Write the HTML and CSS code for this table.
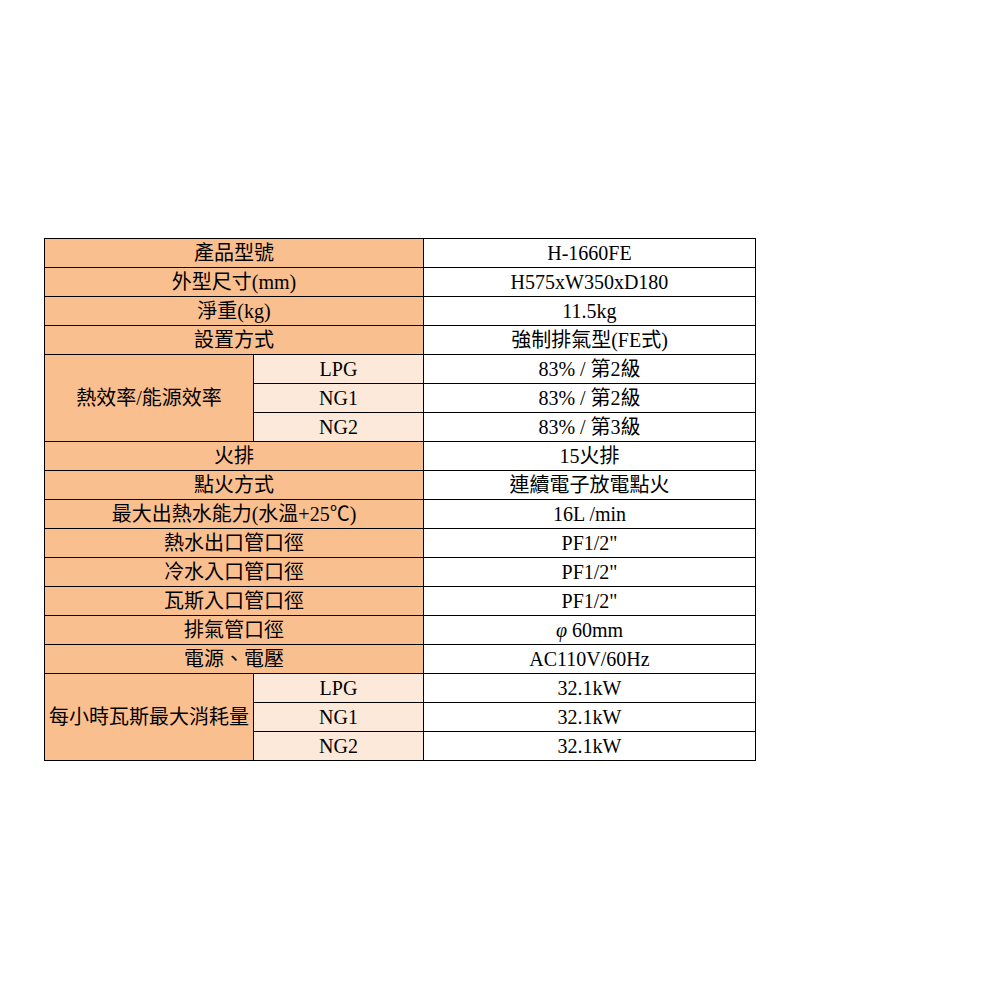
FILE: index.html
```html
<!DOCTYPE html>
<html lang="zh-Hant">
<head>
<meta charset="utf-8">
<link rel="stylesheet" href="styles.css">
</head>
<body>
<table class="spec">
  <colgroup>
    <col class="c1">
    <col class="c2">
    <col class="c3">
  </colgroup>
  <tr><th colspan="2">產品型號</th><td>H-1660FE</td></tr>
  <tr><th colspan="2">外型尺寸(mm)</th><td>H575xW350xD180</td></tr>
  <tr><th colspan="2">淨重(kg)</th><td>11.5kg</td></tr>
  <tr><th colspan="2">設置方式</th><td>強制排氣型(FE式)</td></tr>
  <tr><th rowspan="3">熱效率/能源效率</th><th class="sub">LPG</th><td>83% / 第2級</td></tr>
  <tr><th class="sub">NG1</th><td>83% / 第2級</td></tr>
  <tr><th class="sub">NG2</th><td>83% / 第3級</td></tr>
  <tr><th colspan="2">火排</th><td>15火排</td></tr>
  <tr><th colspan="2">點火方式</th><td>連續電子放電點火</td></tr>
  <tr><th colspan="2">最大出熱水能力(水溫+25℃)</th><td>16L /min</td></tr>
  <tr><th colspan="2">熱水出口管口徑</th><td>PF1/2"</td></tr>
  <tr><th colspan="2">冷水入口管口徑</th><td>PF1/2"</td></tr>
  <tr><th colspan="2">瓦斯入口管口徑</th><td>PF1/2"</td></tr>
  <tr><th colspan="2">排氣管口徑</th><td><span class="phi">φ</span> 60mm</td></tr>
  <tr><th colspan="2">電源、電壓</th><td>AC110V/60Hz</td></tr>
  <tr><th rowspan="3">每小時瓦斯最大消耗量</th><th class="sub">LPG</th><td>32.1kW</td></tr>
  <tr><th class="sub">NG1</th><td>32.1kW</td></tr>
  <tr><th class="sub">NG2</th><td>32.1kW</td></tr>
</table>
</body>
</html>
```
FILE: styles.css
```css
html, body {
  margin: 0;
  padding: 0;
  background: #ffffff;
}

body {
  padding: 238px 0 0 44px;
  font-family: "Liberation Serif", "Noto Sans CJK TC", serif;
  color: #000000;
}

.spec {
  border-collapse: collapse;
  table-layout: fixed;
  width: 711px;
}

.c1 { width: 209px; }
.c2 { width: 170px; }
.c3 { width: 332px; }

.spec th,
.spec td {
  border: 1px solid #000000;
  height: 28px;
  padding: 0;
  font-size: 20px;
  font-weight: normal;
  text-align: center;
  vertical-align: middle;
  line-height: 28px;
  white-space: nowrap;
  overflow: hidden;
}

.spec th {
  background: #fabf8f;
}

.spec th.sub {
  background: #fde9d9;
}

.spec td {
  background: #ffffff;
}

.phi {
  font-style: italic;
}
```
